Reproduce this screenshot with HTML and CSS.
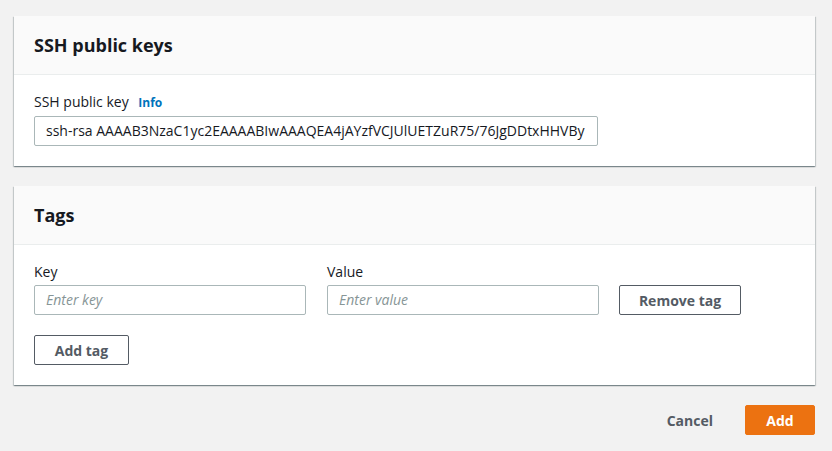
FILE: index.html
```html
<!DOCTYPE html>
<html>
<head>
<meta charset="utf-8">
<link rel="stylesheet" href="styles.css">
</head>
<body>
<div class="page">
  <section class="card">
    <div class="card-header"><h2>SSH public keys</h2></div>
    <div class="card-body">
      <div class="field">
        <div class="label">SSH public key <span class="info">Info</span></div>
        <div class="input wide">ssh-rsa AAAAB3NzaC1yc2EAAAABIwAAAQEA4jAYzfVCJUlUETZuR75/76JgDDtxHHVBy</div>
      </div>
    </div>
  </section>
  <section class="card">
    <div class="card-header"><h2>Tags</h2></div>
    <div class="card-body tags-body">
      <div class="tag-row">
        <div class="field col">
          <div class="label">Key</div>
          <div class="input placeholder">Enter key</div>
        </div>
        <div class="field col">
          <div class="label">Value</div>
          <div class="input placeholder">Enter value</div>
        </div>
        <button class="btn remove">Remove tag</button>
      </div>
      <button class="btn add-tag">Add tag</button>
    </div>
  </section>
  <div class="footer">
    <button class="link-btn">Cancel</button>
    <button class="primary">Add</button>
  </div>
</div>
</body>
</html>
```

FILE: styles.css
```css
* { box-sizing: border-box; }
html, body { margin: 0; padding: 0; }
body {
  background: #f2f2f2;
  font-family: "Open Sans", "Noto Sans", sans-serif;
  color: #16191f;
  font-size: 14px;
}
.page {
  padding: 16px 17px 0 14px;
  display: flex;
  flex-direction: column;
  gap: 20px;
}
.card {
  background: #fff;
  box-shadow: 0 1px 1px 0 rgba(0,28,36,0.3), 1px 1px 1px 0 rgba(0,28,36,0.15), -1px 1px 1px 0 rgba(0,28,36,0.15);
}
.card-header {
  background: #fafafa;
  border-bottom: 1px solid #eaeded;
  padding: 18px 20px 18px;
}
.card-header h2 {
  margin: 0;
  font-size: 18px;
  line-height: 22px;
  font-weight: 700;
  color: #16191f;
}
.card-body {
  padding: 17px 20px 20px;
}
.label {
  font-size: 14px;
  line-height: 20px;
  margin-bottom: 3px;
  color: #16191f;
}
.info {
  color: #0073bb;
  font-weight: 700;
  font-size: 12px;
  margin-left: 6px;
}
.input {
  height: 30px;
  border: 1px solid #aab7b8;
  border-radius: 2px;
  padding: 0 11px;
  font-size: 14px;
  line-height: 28px;
  white-space: nowrap;
  overflow: hidden;
}
.input.wide { width: 564px; }
.input.placeholder {
  color: #879596;
  font-style: italic;
}
.tag-row {
  display: flex;
  align-items: flex-end;
  gap: 20px;
}
.col { width: 272px; }
.col + .col { margin-left: 1px; }
.btn {
  font-family: inherit;
  background: #fff;
  border: 1px solid #545b64;
  border-radius: 2px;
  color: #545b64;
  font-weight: 700;
  font-size: 14px;
  height: 30px;
  padding: 0;
  white-space: nowrap;
  cursor: pointer;
}
.btn.remove { width: 122px; }
.btn.add-tag { display: block; margin-top: 20px; width: 95px; }
.footer {
  display: flex;
  justify-content: flex-end;
  align-items: center;
  gap: 12px;
}
.link-btn {
  font-family: inherit;
  background: none;
  border: none;
  color: #545b64;
  font-weight: 700;
  font-size: 14px;
  height: 30px;
  padding: 0 20px;
  white-space: nowrap;
}
.primary {
  font-family: inherit;
  background: #ec7211;
  border: 1px solid #ec7211;
  border-radius: 2px;
  color: #fff;
  font-weight: 700;
  font-size: 14px;
  height: 30px;
  width: 70px;
  padding: 0;
}
```
